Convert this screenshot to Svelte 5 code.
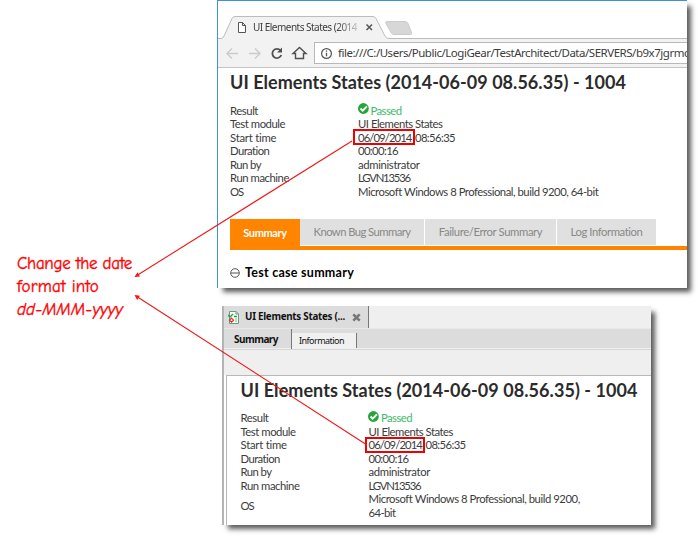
<script>
  // Spreads the letters of an element so that its text spans the given width.
  function fit(node, width) {
    const natural = node.getBoundingClientRect().width;
    const count = node.textContent.length;
    node.style.letterSpacing = `${(width - natural) / count}px`;
  }

  const title = 'UI Elements States (2014-06-09 08.56.35) - 1004';

  const details = [
    ['Result', 28, 'Passed', 31],
    ['Test module', 55, 'UI Elements States', 84.5],
    ['Start time', 46.5, '06/09/2014', 53.5],
    ['Duration', 39.5, '00:00:16', 40],
    ['Run by', 31, 'administrator', 61.5],
    ['Run machine', 59, 'LGVN13536', 52],
  ];

  const tabs = [
    ['Summary', 43.5, 70],
    ['Known Bug Summary', 97, 124],
    ['Failure/Error Summary', 103.5, 131],
    ['Log Information', 72, 99],
  ];
</script>

{#snippet rows()}
  {#each details as [label, lw, value, vw]}
    <div class="row">
      <div class="label"><span use:fit={lw}>{label}</span></div>
      {#if label === 'Result'}
        <svg class="check" width="11" height="11" viewBox="0 0 11 11">
          <circle cx="5.4" cy="5.5" r="5.4" fill="#27a53b" />
          <path d="M2.5 5.5 4.7 7.7 8.9 3.4" fill="none" stroke="#fff" stroke-width="1.9" />
        </svg>
        <span class="passed" use:fit={vw}>{value}</span>
      {:else if label === 'Start time'}
        <span class="date"><span use:fit={vw}>{value}</span></span>
        <span class="time" use:fit={40}>08:56:35</span>
      {:else}
        <span use:fit={vw}>{value}</span>
      {/if}
    </div>
  {/each}
{/snippet}

<main>
  <section class="window browser">
    <div class="strip">
      <svg width="200" height="24" viewBox="0 0 200 24">
        <path d="M0 23.500H3Q5 23.500 6 21L14 3.500Q15 1.500 17 1.500H155Q157 1.500 158 3.500L167 21Q168 23.500 171 23.500H200V24H0Z" fill="#f2f2f2" />
        <path d="M0 23.500H3Q5 23.500 6 21L14 3.500Q15 1.500 17 1.500H155Q157 1.500 158 3.500L167 21Q168 23.500 171 23.500H200" fill="none" stroke="#bcbcbc" />
        <path d="M168.500 6.500H187Q189 6.500 190 8.500L193.500 17.500Q194 19.500 192.500 19.500H176Q174 19.500 173 17.500L168 8.500Q167 6.500 168.500 6.500Z" fill="#d7d7d7" stroke="#cbcbcb" />
        <path d="M20.500 7.500H24.500L27.500 10.500V17.500H20.500ZM24.500 7.500V10.500H27.500" fill="#fff" stroke="#555" />
        <path d="M148.500 9.500 154 15M154 9.500 148.500 15" stroke="#555" stroke-width="1.5" />
      </svg>
      <span class="tabtitle"><span use:fit={104}>UI Elements States (2014</span></span>
    </div>
    <div class="toolbar">
      <svg width="96" height="29" viewBox="0 0 96 29">
        <g fill="none" stroke="#cbcbcb" stroke-width="1.4">
          <path d="M20 14.500H9.500M14 9.500 9 14.500 14 19.500" />
          <path d="M31 14.500H41.500M37 9.500 42 14.500 37 19.500" />
        </g>
        <path d="M62.500 11.500A4.600 4.600 0 1 0 63.300 16" fill="none" stroke="#505050" stroke-width="1.8" />
        <path d="M64 8.500V13.500H59Z" fill="#505050" />
        <path d="M75 14.500 81.500 8.500 88 14.500H85.500V19.500H77.500V14.500Z" fill="none" stroke="#505050" stroke-width="1.4" />
      </svg>
      <div class="address">
        <svg width="13" height="13" viewBox="0 0 13 13">
          <circle cx="6.500" cy="6.500" r="4.900" fill="none" stroke="#555" stroke-width="1.200" />
          <path d="M6.500 5.700V9.200M6.500 3.600V4.800" stroke="#555" stroke-width="1.300" />
        </svg>
        <span use:fit={351}>file:///C:/Users/Public/LogiGear/TestArchitect/Data/SERVERS/b9x7jgrmc</span>
      </div>
    </div>
    <div class="page">
      <h1><span use:fit={396}>{title}</span></h1>
      <div class="details">
        {@render rows()}
        <div class="row">
          <div class="label"><span use:fit={13}>OS</span></div>
          <span use:fit={240}>Microsoft Windows 8 Professional, build 9200, 64-bit</span>
        </div>
      </div>
      <nav>
        {#each tabs as [name, w, box], i}
          <div class="tab" class:active={i === 0} style:width="{box}px"><span use:fit={w}>{name}</span></div>
        {/each}
      </nav>
      <h2>
        <svg width="10" height="10" viewBox="0 0 10 10">
          <circle cx="5" cy="5" r="4.300" fill="none" stroke="#555" />
          <path d="M1 5H9" stroke="#555" />
        </svg>
        <span use:fit={109}>Test case summary</span>
      </h2>
    </div>
  </section>

  <section class="window viewer">
    <div class="filetabs">
      <div class="filetab">
        <svg width="12" height="13" viewBox="0 0 12 13">
          <path d="M1.500 .5H8L10.500 3V12.500H1.500Z" fill="#f6fff6" stroke="#6b9b7a" />
          <path d="M8 .5V3H10.500" fill="none" stroke="#6b9b7a" />
          <path d="M0 4 2 6 5 3M6 5.500H9" fill="none" stroke="#2ba24a" stroke-width="1.400" />
          <path d="M3.500 7.200 5.500 9.200 3.500 11.200 1.500 9.200Z" fill="#fff" stroke="#e22c2c" stroke-width="1.200" />
          <path d="M7 8H9M7 10H9" stroke="#8b8" />
        </svg>
        <b use:fit={100}>UI Elements States (...</b>
        <svg class="close" width="9" height="9" viewBox="0 0 9 9">
          <path d="M1.300 1.300 7.700 7.700M7.700 1.300 1.300 7.700" stroke="#777" stroke-width="2.600" />
        </svg>
      </div>
    </div>
    <div class="subtabs">
      <div class="sub on"><b use:fit={44}>Summary</b></div>
      <div class="sub off"><span use:fit={45}>Information</span></div>
    </div>
    <div class="band"></div>
    <div class="page">
      <h1><span use:fit={397}>{title}</span></h1>
      <div class="details">
        {@render rows()}
        <div class="row tall">
          <div class="label"><span use:fit={13}>OS</span></div>
          <div>
            <div class="line"><span use:fit={211}>Microsoft Windows 8 Professional, build 9200,</span></div>
            <div class="line"><span use:fit={27}>64-bit</span></div>
          </div>
        </div>
      </div>
    </div>
  </section>

  <p class="note">
    <span use:fit={115}>Change the date</span><br />
    <span use:fit={82}>format into</span><br />
    <em use:fit={106}>dd-MMM-yyyy</em>
  </p>

  <svg class="arrows" width="698" height="550" viewBox="0 0 698 550">
    <g fill="none" stroke="#f01818" stroke-width="1.100">
      <path d="M352 141 136 276M367 445 136 296" />
    </g>
    <path d="M134.500 277 137.500 272.300 140 276.400ZM134.500 295 140 295.800 137.200 300Z" fill="#f01818" />
  </svg>
</main>

<style>
  :global(body) {
    margin: 0;
    background: #fff;
  }

  main {
    position: relative;
    width: 698px;
    height: 550px;
    overflow: hidden;
    font: 11.3px/13.58px Lato, 'Noto Sans', sans-serif;
    color: #3c3c3c;
    white-space: nowrap;
  }

  svg {
    display: block;
    flex: none;
  }

  .window {
    position: absolute;
    box-sizing: border-box;
    box-shadow: 5px 5px 5px -1px rgba(0, 0, 0, 0.65);
    background: #fff;
  }

  .browser {
    left: 217px;
    top: 0;
    width: 470px;
    height: 288px;
    border-top: 1px solid #3f92d6;
    border-left: 1px solid #3f92d6;
  }

  .strip {
    position: relative;
    height: 38px;
    padding-top: 14px;
    box-sizing: border-box;
    background: linear-gradient(#bcbcbc, #bcbcbc) 190px 37px / 280px 1px no-repeat;
  }

  .tabtitle {
    position: absolute;
    left: 35px;
    top: 19px;
    font: 10px/14px 'Noto Sans', sans-serif;
    mask-image: linear-gradient(90deg, #000 84px, rgba(0, 0, 0, 0.25) 104px);
  }

  .toolbar {
    display: flex;
    align-items: center;
    height: 29px;
    box-sizing: border-box;
    background: #f2f2f2;
    border-bottom: 1px solid #c4c4c4;
  }

  .address {
    display: flex;
    align-items: center;
    flex: 1;
    min-width: 0;
    height: 22px;
    box-sizing: border-box;
    padding-left: 5px;
    gap: 5px;
    overflow: hidden;
    background: #fff;
    border: 1px solid #b8b8b8;
    border-right: 0;
    font: 11.500px/16px 'Noto Sans', sans-serif;
  }

  .page {
    padding-left: 12px;
  }

  h1 {
    margin: 0;
    height: 28px;
    font-size: 18px;
    line-height: 29px;
    font-weight: 700;
    color: #2b2b2b;
  }

  .details {
    padding-top: 7.500px;
  }

  .row {
    display: flex;
    align-items: center;
    height: 13.58px;
  }

  .label {
    width: 128px;
    flex: none;
  }

  .row.tall {
    height: 27.16px;
  }

  .line {
    height: 13.58px;
  }

  .check {
    margin: -3px 2px 0 -0.5px;
  }

  .passed {
    color: #3dbb67;
  }

  .date {
    position: relative;
    width: 57px;
  }

  .date::after {
    content: '';
    position: absolute;
    left: -5px;
    top: -1.500px;
    width: 58px;
    height: 12px;
    border: 2px solid #f00000;
  }

  nav {
    display: flex;
    gap: 1px;
    height: 27px;
    margin-top: 20.500px;
    border-bottom: 4px solid #ff8400;
  }

  .tab {
    display: flex;
    align-items: center;
    justify-content: center;
    height: 26px;
    background: #e0e0e0;
    color: #888;
    line-height: 16px;
  }

  .tab.active {
    height: 27px;
    background: #ff8400;
    color: #fff;
    font-weight: 700;
    font-size: 11px;
    margin-right: -1px;
  }

  h2 {
    display: flex;
    align-items: center;
    gap: 5px;
    margin: 15px 0 0;
    height: 16px;
    font-size: 12.500px;
    line-height: 16px;
    font-weight: 700;
    color: #000;
  }

  .viewer {
    left: 222px;
    top: 306px;
    width: 429px;
    height: 219px;
    border-left: 2px solid #b4b4b4;
  }

  .filetabs {
    height: 22px;
    background: #efefef;
  }

  .filetab {
    display: flex;
    align-items: center;
    width: 145px;
    height: 22px;
    box-sizing: border-box;
    padding-left: 4px;
    gap: 5px;
    background: #dcdcdc;
    border-right: 1px solid #777;
    color: #111;
    font: 9.800px/16px 'Noto Sans', sans-serif;
  }

  .close {
    margin-left: 2px;
  }

  .subtabs {
    display: flex;
    height: 21px;
    padding-left: 1px;
    box-sizing: border-box;
    background: #dcdcdc;
    border-top: 1px solid #e8e8e8;
    border-bottom: 1px solid #f0f0f0;
    font: 10px/20px 'Noto Sans', sans-serif;
    color: #111;
  }

  .sub {
    box-sizing: border-box;
    height: 20px;
    border-right: 1px solid #777;
  }

  .on {
    width: 67px;
    padding-left: 9px;
    line-height: 21px;
  }

  .off {
    width: 65px;
    height: 15px;
    margin-top: 4px;
    padding-left: 7px;
    font-size: 9px;
    line-height: 16px;
    background: #f0f0f0;
  }

  .band {
    height: 26px;
    box-sizing: border-box;
    background: #efefef;
    border-top: 1px solid #d6d6d6;
  }

  .viewer .page {
    height: 150px;
    box-sizing: border-box;
    margin-left: 2px;
    padding-left: 13.500px;
    border-left: 1px solid #b8b8b8;
    border-top: 1px solid #b8b8b8;
  }

  .viewer .details {
    padding-top: 7px;
  }

  .viewer .date::after {
    left: -4px;
    width: 56px;
  }

  .note {
    position: absolute;
    left: 17px;
    top: 252px;
    margin: 0;
    font: 17px/23px 'Comic Sans MS', 'Comic Neue', cursive;
    -webkit-text-stroke: 0.35px #f00;
    color: #f00;
  }

  .arrows {
    position: absolute;
    left: 0;
    top: 0;
  }
</style>
